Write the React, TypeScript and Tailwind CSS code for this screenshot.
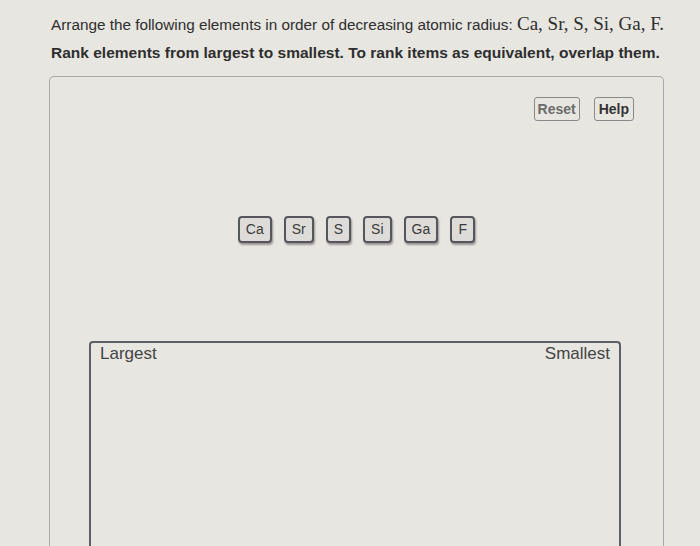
import React from "react";

const elements = ["Ca", "Sr", "S", "Si", "Ga", "F"];

function Tile({ label }: { label: string }) {
  return (
    <div className="h-[27px] min-w-[25px] px-[6px] flex items-center justify-center rounded-[4px] border-2 border-[#55575c] bg-[#dedcd8] text-[14px] text-[#3a3a3a] shadow-[1px_2px_2px_rgba(0,0,0,0.35)]">
      {label}
    </div>
  );
}

export default function App() {
  return (
    <div className="w-[700px] h-[546px] overflow-hidden bg-[#e8e6e1] font-['Liberation_Sans',Arial,sans-serif] text-[#2e2e2e]">
      <div className="pl-[51px] pt-[13px]">
        <p className="text-[15.3px] leading-[22px]">
          Arrange the following elements in order of decreasing atomic radius:{" "}
          <span className="font-['Liberation_Serif',serif] text-[19px]">Ca, Sr, S, Si, Ga, F.</span>
        </p>
        <p className="mt-[7px] text-[15.5px] leading-[20px] font-bold">
          Rank elements from largest to smallest. To rank items as equivalent, overlap them.
        </p>
      </div>

      <div className="ml-[49px] mt-[13px] w-[615px] h-[520px] rounded-t-[5px] border border-b-0 border-[#a9a9a9]">
        <div className="flex justify-end gap-[14px] pt-[20px] pr-[29px]">
          <button className="h-[24px] px-[3px] rounded-[3px] border border-[#8a8a8a] text-[14px] font-bold text-[#6b6b6b]">
            Reset
          </button>
          <button className="h-[24px] px-[4px] rounded-[3px] border border-[#8a8a8a] text-[14px] font-bold text-[#333]">
            Help
          </button>
        </div>

        <div className="flex justify-center gap-[12px] mt-[95px]">
          {elements.map((e) => (
            <Tile key={e} label={e} />
          ))}
        </div>

        <div className="ml-[39px] mt-[98px] w-[532px] h-[300px] rounded-t-[4px] border-2 border-b-0 border-[#5d5f66] flex justify-between px-[9px] pt-[1px] text-[17px] leading-[20px] text-[#444]">
          <span>Largest</span>
          <span>Smallest</span>
        </div>
      </div>
    </div>
  );
}
